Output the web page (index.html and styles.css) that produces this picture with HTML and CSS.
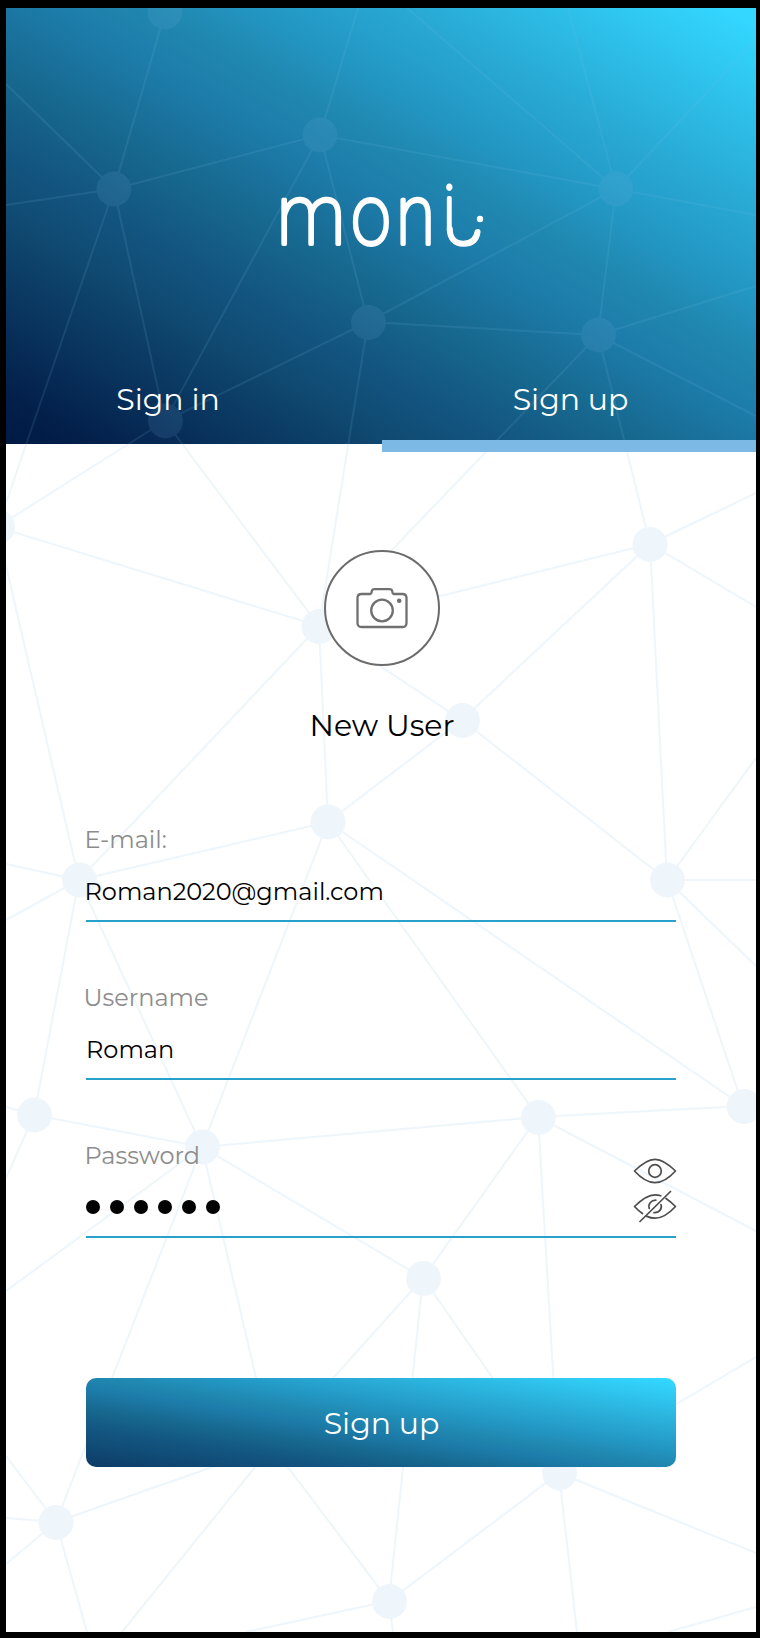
FILE: index.html
```html
<!DOCTYPE html>
<html lang="en">
<head>
<meta charset="utf-8">
<title>moni – Sign up</title>
<link rel="stylesheet" href="styles.css">
</head>
<body>
<main class="screen">
  <svg class="network" viewBox="6 8 750 1624" aria-hidden="true">
    <g stroke-width="2" fill="none">
      <path d="M165 12L114 189L6 84M6 205L114 189L320 135L358 8M114 189L165 421L320 135L616 189L407 8M114 189L6 503M320 135L368 322L616 189L568 8M368 322L598 335L616 189L756 215M616 189L756 40M368 322L165 421L-3 527L319 626L165 421M368 322L319 626L598 335L650 544L319 626L462 720L650 544L667 880L756 758M598 335L756 286M598 335L756 416M650 544L756 493M650 544L756 607"/>
      <path d="M-3 527L79 880L319 626L328 822L462 720L667 880H756M328 822L79 880L202 1147L328 822L538 1117L743 1106L328 822M6 864L79 880L6 920M79 880L34 1115L202 1147L538 1117L756 1231M6 1107L34 1115L6 1178M667 880L756 966M667 880L743 1106L756 1114M202 1147L6 1291M202 1147L56 1522L272 1446L202 1147L423 1278L538 1117L559 1473L423 1278L272 1446L122 1632M272 1446L389 1601L559 1473L756 1553M423 1278L389 1601L393 1632M559 1473L756 1357M559 1473L577 1632M6 1456L56 1522L6 1564M6 1518L56 1522L87 1632M389 1601L246 1632M668 1632L756 1607"/>
    </g>
    <g stroke="none">
      <circle cx="165" cy="12" r="17.4"/><circle cx="114" cy="189" r="17.4"/><circle cx="320" cy="135" r="17.4"/>
      <circle cx="368.5" cy="322.5" r="17.4"/><circle cx="616" cy="189" r="17.4"/><circle cx="598.5" cy="335" r="17.4"/>
      <circle cx="165.5" cy="421" r="17.4"/><circle cx="-2.5" cy="527" r="17.4"/><circle cx="319" cy="626.5" r="17.4"/>
      <circle cx="650" cy="544.5" r="17.4"/><circle cx="462.5" cy="720.5" r="17.4"/><circle cx="328" cy="822" r="17.4"/>
      <circle cx="79.5" cy="880" r="17.4"/><circle cx="667.5" cy="880" r="17.4"/><circle cx="34.5" cy="1115" r="17.4"/>
      <circle cx="202.5" cy="1147" r="17.4"/><circle cx="538.5" cy="1117.5" r="17.4"/><circle cx="744" cy="1106.5" r="17.4"/>
      <circle cx="423.5" cy="1278.5" r="17.4"/><circle cx="56" cy="1522.5" r="17.4"/><circle cx="389.5" cy="1601.5" r="17.4"/>
      <circle cx="559.5" cy="1473" r="17.4"/>
    </g>
  </svg>

  <header class="hero">
    <svg class="logo" viewBox="270 176 220 80" role="img" aria-label="moni">
      <text class="logo-text" transform="scale(.91 1)" x="303.500" y="244.500">m</text>
      <text class="logo-text" transform="scale(.85 1)" y="244.500"><tspan x="412.500">o</tspan><tspan x="465">n</tspan><tspan class="logo-i" x="521" y="231">i</tspan></text>
      <path d="M448.800 229C448.800 238 453.500 243.700 462.500 243.700C471.500 243.700 475.500 239 476.500 232" fill="none" stroke="#fff" stroke-width="6" stroke-linecap="round"/>
      <circle cx="479" cy="219" r="3.200" fill="#fff"/>
    </svg>
    <nav class="tabs">
      <a class="tab">Sign in</a>
      <a class="tab active">Sign up</a>
    </nav>
  </header>

  <section class="profile">
    <div class="avatar">
      <svg width="52" height="42" viewBox="0 0 52 42" fill="none" stroke="#707070" stroke-width="2.300" stroke-linejoin="round">
        <path d="M5.500 7H14.500C15.700 7 15.500 5.500 15.700 4.500C16 3 17 2.200 18.500 2.200H33.500C35 2.200 36 3 36.300 4.500C36.500 5.500 36.300 7 37.500 7H46.500C49 7 50.500 8.500 50.500 11V36C50.500 38.500 49 40 46.500 40H5.500C3 40 1.500 38.500 1.500 36V11C1.500 8.500 3 7 5.500 7Z"/>
        <circle cx="26" cy="23.500" r="10.800"/>
        <circle cx="43.200" cy="13.700" r="2.300" fill="#707070" stroke="none"/>
      </svg>
    </div>
    <h1 class="name">New User</h1>
  </section>

  <form class="form">
    <div class="field">
      <label class="label">E-mail:</label>
      <div class="value value-email">Roman2020@gmail.com</div>
    </div>
    <div class="field">
      <label class="label label-user">Username</label>
      <div class="value">Roman</div>
    </div>
    <div class="field">
      <label class="label">Password</label>
      <div class="dots"><i></i><i></i><i></i><i></i><i></i><i></i></div>
      <svg class="eyes" width="44" height="68" viewBox="0 0 44 68" fill="none" stroke="#4d4d4d" stroke-width="1.700" stroke-linecap="round" stroke-linejoin="round">
        <path d="M1.500 14C7 8.500 14 2.300 22 2.300S37 8.500 42.500 14C37 20 30 25.700 22 25.700S7 20 1.500 14Z"/>
        <circle cx="22" cy="14" r="6.300"/>
        <path d="M9.500 56.500C6.500 54.500 4 52.300 1.500 49.500C7 44 14 37.800 22 37.800C24.200 37.800 26 38.200 27.800 38.800M33 41.500C36.500 43.800 39.500 46.500 42.500 49.500C37 55.500 30 61.200 22 61.200C18.800 61.200 16 60.300 13.300 59.100"/>
        <path d="M16.300 51.500C14.800 47 18 43.200 22.800 43.200M28 47.500C29.500 52 26 56 21 55.700M37.500 34.500L7 64.500"/>
      </svg>
    </div>
    <button class="submit" type="button">Sign up</button>
  </form>
</main>
</body>
</html>
```
FILE: styles.css
```css
* { box-sizing: border-box; }

body {
  margin: 0;
  padding: 8px 4px 6px 6px;
  background: #000;
  font-family: Montserrat, Inter, "Open Sans", sans-serif;
  font-weight: 400;
}

.screen {
  position: relative;
  display: flex;
  flex-direction: column;
  isolation: isolate;
  width: 750px;
  height: 1624px;
  overflow: hidden;
  background: #fff;
}

.network {
  position: absolute;
  inset: 0;
  z-index: -1;
  width: 750px;
  height: 1624px;
  fill: #7cb7e6;
  stroke: #7cbfea;
  opacity: .125;
}

.hero {
  position: relative;
  display: flex;
  flex-direction: column;
  align-items: center;
  height: 436.400px;
  padding-top: 168px;
}

.hero::before {
  content: "";
  position: absolute;
  inset: 0;
  z-index: -2;
  background: linear-gradient(to top right, #001a43 0%, #03204b 6%, #104b73 27%, #135682 34%, #176990 43%, #1d7caa 53%, #2088b0 60%, #2397c4 67%, #28a8d3 76%, #33d7ff 98%);
}

.logo { flex: none; width: 220px; height: 80px; overflow: visible; }

.logo-text {
  font-family: Roboto, sans-serif;
  font-size: 83px;
  font-weight: 100;
  fill: #fff;
  stroke: #fff;
  stroke-width: 4px;
  stroke-linejoin: round;
}

.logo-i { font-size: 63px; }

.tabs {
  display: grid;
  grid-template-columns: 376px 374px;
  width: 750px;
  height: 84px;
  margin-top: 112px;
  flex: none;
}

.tab {
  display: flex;
  justify-content: center;
  padding: 14px 0 0 3px;
  color: #fff;
  font-size: 30px;
  line-height: 36px;
}

.tab:first-child { padding: 14px 52px 0 0; }
.active { border-bottom: 12px solid #7cb9e5; }

.profile {
  display: flex;
  flex-direction: column;
  align-items: center;
  padding-left: 2px;
}

.avatar {
  display: grid;
  place-items: center;
  width: 116px;
  height: 116px;
  margin-top: 106px;
  border: 2px solid #6b6b6b;
  border-radius: 50%;
  background: #fff;
}

.name {
  margin: 42px 0 0;
  font-size: 30px;
  font-weight: 400;
  line-height: 36px;
  color: #000;
}

.form {
  display: flex;
  flex-direction: column;
  width: 590px;
  margin: 80px 0 0 80px;
}

.field {
  position: relative;
  height: 98px;
  margin-bottom: 60px;
  padding-top: 1px;
  border-bottom: 2px solid #27a1c9;
}

.label {
  display: block;
  margin: 0 0 22px -1.500px;
  font-size: 24px;
  line-height: 30px;
  color: #8c8c8c;
}

.label-user { margin-left: -2.500px; }

.value {
  font-size: 24px;
  line-height: 30px;
  color: #000;
}

.value-email { margin-left: -1.500px; }

.dots { display: flex; gap: 10px; padding-top: 7px; }

.dots i {
  width: 14px;
  height: 14px;
  border-radius: 50%;
  background: #000;
}

.eyes { position: absolute; top: 17px; right: -1px; }

.submit {
  height: 88.400px;
  margin-top: 80px;
  padding: 2px 0 0 1px;
  border: 0;
  border-radius: 10px;
  background: linear-gradient(to top right, #0e3b66 0%, #104b75 12%, #135682 22%, #176990 33%, #1d7caa 44%, #2088b0 51%, #2397c4 60%, #28a8d3 70%, #33d7ff 98%);
  color: #fff;
  font: inherit;
  font-size: 30px;
}
```
